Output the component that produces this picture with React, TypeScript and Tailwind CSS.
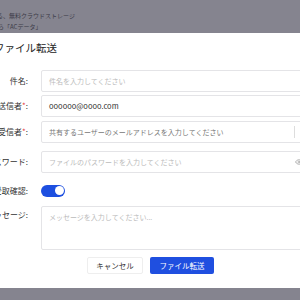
import { Eye } from "lucide-react";

const font = { fontFamily: '"Noto Sans CJK JP", "Noto Sans", sans-serif' };

function Label({ text, required }: { text: string; required?: boolean }) {
  return (
    <div className="w-[80px] shrink-0 pr-[2px] text-right text-[8px] text-[#333]">
      {text}
      {required && <span className="text-[#e53e3e]">*</span>}:
    </div>
  );
}

export default function App() {
  return (
    <div className="flex h-[300px] w-[300px] flex-col overflow-hidden bg-[#85848f]" style={font}>
      <div className="h-[33px] shrink-0 pt-[10px] text-[6px] leading-[11px] text-[#3c3b47]">
        <div className="-ml-[3px] whitespace-nowrap">る、無料クラウドストレージ</div>
        <div className="-ml-[2px] whitespace-nowrap">ら「ACデータ」</div>
      </div>

      <div className="-ml-[50px] flex h-[255px] w-[420px] shrink-0 flex-col bg-white">
        <div className="pb-[8px] pl-[44px] pt-[7px] text-[10.5px] text-[#222]">ファイル転送</div>

        <div className="flex flex-col gap-[3px] pt-[6px]">
          <div className="flex h-[22px] items-center">
            <Label text="件名" />
            <div className="ml-[11px] flex h-[22px] flex-1 items-center rounded-[2px] border border-[#e4e4e7] px-[7px] text-[7px] text-[#bbb]">
              件名を入力してください
            </div>
          </div>
          <div className="flex h-[22px] items-center">
            <Label text="送信者" required />
            <div className="ml-[11px] flex h-[22px] flex-1 items-center rounded-[2px] border border-[#e4e4e7] px-[7px] text-[7.5px] text-[#333]">
              oooooo@oooo.com
            </div>
          </div>
          <div className="mt-[1px] flex h-[22px] items-center">
            <Label text="受信者" required />
            <div className="ml-[11px] flex h-[22px] flex-1 items-center rounded-[2px] border border-[#e4e4e7] pl-[7px] text-[7px] text-[#777]">
              <span className="flex-1">共有するユーザーのメールアドレスを入力してください</span>
              <span className="mr-[74px] h-[12px] w-px bg-[#ddd]" />
            </div>
          </div>
          <div className="mt-[5px] flex h-[22px] items-center">
            <Label text="パスワード" />
            <div className="ml-[11px] flex h-[22px] flex-1 items-center rounded-[2px] border border-[#e4e4e7] pl-[7px] text-[7px] text-[#bbb]">
              <span className="flex-1">ファイルのパスワードを入力してください</span>
              <Eye className="mr-[66px] h-[8px] w-[8px] text-[#999]" />
            </div>
          </div>
          <div className="mt-[4px] flex h-[22px] items-center">
            <Label text="受取確認" />
            <div className="ml-[11px] flex h-[12px] w-[24px] items-center justify-end rounded-full bg-[#1d4fe0] pr-[1.5px]">
              <span className="h-[9px] w-[9px] rounded-full bg-white" />
            </div>
          </div>
          <div className="mt-[1px] flex items-start">
            <div className="pt-[3px]">
              <Label text="メッセージ" />
            </div>
            <div className="ml-[11px] h-[44px] flex-1 rounded-[2px] border border-[#e4e4e7] px-[7px] pt-[5px] text-[7px] text-[#bbb]">
              メッセージを入力してください...
            </div>
          </div>
        </div>

        <div className="flex gap-[7px] pl-[137px] pt-[7px]">
          <button className="h-[17px] w-[56px] rounded-[2px] border border-[#eee] bg-white text-[7.5px] text-[#333]">
            キャンセル
          </button>
          <button className="h-[17px] w-[64px] rounded-[2px] bg-[#1f4fe0] text-[7.5px] text-white">
            ファイル転送
          </button>
        </div>
      </div>
    </div>
  );
}
